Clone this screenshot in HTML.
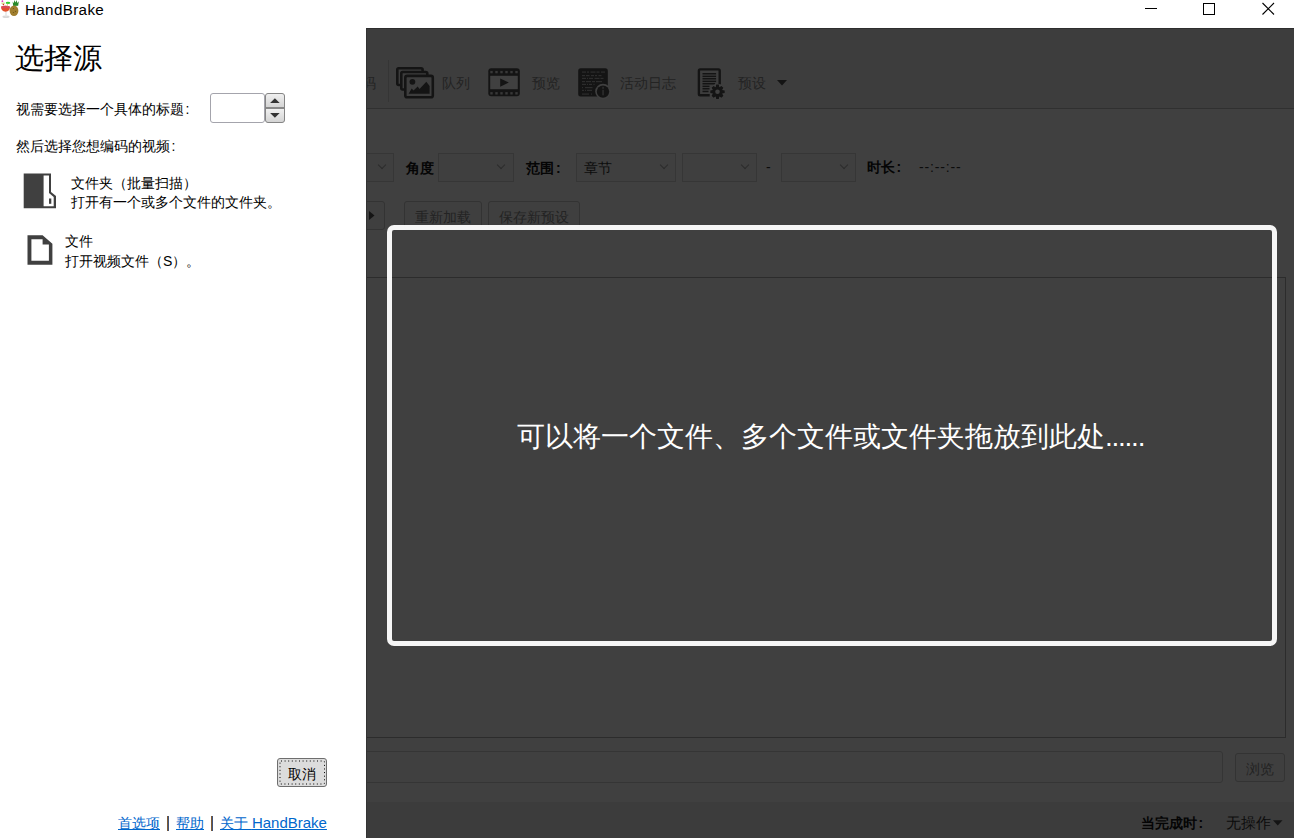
<!DOCTYPE html>
<html><head><meta charset="utf-8">
<style>
*{margin:0;padding:0;box-sizing:border-box}
html,body{width:1294px;height:838px;overflow:hidden;background:#fff;font-family:"Liberation Sans",sans-serif;color:#000}
.a{position:absolute;white-space:nowrap}
#titlebar{position:absolute;left:0;top:0;width:1294px;height:28px;background:#fff}
#left{position:absolute;left:0;top:28px;width:366px;height:810px;background:#fff}
#main{position:absolute;left:366px;top:28px;width:928px;height:810px;background:#404040;overflow:hidden}
.t14{font-size:14px;line-height:18px}
.link{color:#0066cc;text-decoration:underline;text-underline-offset:1px}
.dk{color:#0c0c0c}
.tb{color:#232323}
.bl{color:#050505;font-weight:bold}
.dd{position:absolute;border:1px solid #363636;background:#3f3f3f}
.chev{position:absolute;width:6px;height:6px;border-right:1.3px solid #2c2c2c;border-bottom:1.3px solid #2c2c2c;transform:rotate(45deg)}
.btn{position:absolute;border:1px solid #333;border-radius:3px;background:#3f3f3f}
.hl{position:absolute;height:1px;background:#2a2a2a}
.vl{position:absolute;width:1px;background:#2a2a2a}
</style></head><body>

<div id="titlebar">
  <svg class="a" style="left:0;top:0" width="22" height="22" viewBox="0 0 22 22">
  <ellipse cx="6" cy="16.8" rx="3.6" ry="1.2" fill="#d8d8d8"/>
  <rect x="5.2" y="11.5" width="1.6" height="5" fill="#e6e6e6"/>
  <path d="M1.2 6.5 Q5.5 5.2 9.8 6.5 Q10.2 11.5 5.5 11.8 Q1 11.5 1.2 6.5Z" fill="#e0502a"/>
  <path d="M1.3 6.5 Q5.5 5.2 9.8 6.5 L9.7 8.6 Q5.5 7.6 1.4 8.6Z" fill="#d8485a"/>
  <ellipse cx="8" cy="2.9" rx="2.3" ry="1.1" fill="#30d030"/>
  <rect x="7.1" y="3.5" width="0.6" height="3" fill="#c8b070"/>
  <circle cx="2.4" cy="1.2" r="0.9" fill="#e040c0"/>
  <rect x="1.3" y="2.6" width="3.6" height="1.2" fill="#d0d880"/>
  <circle cx="3.4" cy="4.6" r="0.8" fill="#d03020"/>
  <path d="M12.6 1.5 L13.8 3.2 L14.4 0 L15.6 2.6 L16.8 0 L17.2 3 L18.8 1.2 L18.2 5.8 L13.2 6Z" fill="#2a8a2a"/>
  <ellipse cx="14" cy="10.8" rx="4.4" ry="5.2" fill="#a07e2e"/>
  <g fill="#6e5418"><circle cx="13.5" cy="8.5" r="0.6"/><circle cx="13.5" cy="12.5" r="0.6"/><circle cx="15.5" cy="11.3" r="0.6"/></g>
</svg>
<div class="a" style="left:25px;top:-0.5px;font-size:15.2px;line-height:20px;letter-spacing:0.35px;color:#000">HandBrake</div>
<svg class="a" style="left:1130px;top:0" width="164" height="28" viewBox="0 0 164 28">
  <rect x="15" y="8" width="12" height="1" fill="#000"/>
  <rect x="73.5" y="3.5" width="11" height="11" fill="none" stroke="#000" stroke-width="1"/>
  <path d="M132.5 3 L144 14.5 M144 3 L132.5 14.5" stroke="#000" stroke-width="1.1"/>
</svg>
</div>

<div id="left"></div>

<div class="a" style="left:15px;top:39px;font-size:29px;line-height:38px">选择源</div>
<div class="a t14" style="left:16px;top:100px">视需要选择一个具体的标题<span style="margin-left:1.5px">:</span></div>
<div class="a" style="left:210px;top:93px;width:55px;height:30px;border:1px solid #a4a4ac;border-radius:3px;background:#fff"></div>
<div class="a" style="left:265px;top:93px;width:20px;height:30px;border:1px solid #858585;border-radius:3px;background:#888;overflow:hidden">
  <div style="position:absolute;left:0;top:0;width:18px;height:13px;background:linear-gradient(#f0f0f0,#d4d4d4)"></div>
  <div style="position:absolute;left:0;top:15px;width:18px;height:13px;background:linear-gradient(#f0f0f0,#d4d4d4)"></div>
  <svg style="position:absolute;left:0;top:0" width="18" height="28"><path d="M4.1 8.9 L8.9 4.2 L13.7 8.9Z M4.1 19 L8.9 23.8 L13.7 19Z" fill="#333"/></svg>
</div>
<div class="a t14" style="left:16px;top:137px">然后选择您想编码的视频<span style="margin-left:1.5px">:</span></div>
<svg class="a" style="left:23px;top:173px" width="34" height="36" viewBox="0 0 34 36">
  <path d="M0.7 0.5 H28 V19 L33 23 V35.3 H0.7Z" fill="#404040"/>
  <path d="M20.6 2.5 H26 V20 L30.7 24 V33.3 H20.6Z" fill="#fff"/>
  <rect x="26" y="25.5" width="2.3" height="5.3" fill="#404040"/>
</svg>
<div class="a t14" style="left:71px;top:174px">文件夹（批量扫描）</div>
<div class="a t14" style="left:71px;top:193px">打开有一个或多个文件的文件夹。</div>
<svg class="a" style="left:27px;top:235px" width="26" height="30" viewBox="0 0 26 30">
  <path d="M0.5 0.2 H15.6 L25.4 8.8 V29.8 H0.5Z M4.4 4.2 V25.8 H21.9 V9.4 H15.6 V4.2Z" fill="#404040" fill-rule="evenodd"/>
</svg>
<div class="a t14" style="left:65px;top:232px">文件</div>
<div class="a t14" style="left:65px;top:252px">打开视频文件（S）。</div>
<div class="a" style="left:277px;top:758px;width:50px;height:29px;border:1px solid #6e6e6e;border-radius:3px;background:#dcdcdc">
  <svg style="position:absolute;left:1px;top:1px" width="46" height="25"><rect x="1" y="1" width="44.5" height="23" rx="1" fill="none" stroke="#000" stroke-width="1" stroke-dasharray="1 2.6"/></svg>
  <div class="a t14" style="left:10px;top:6px">取消</div>
</div>
<div class="a t14" style="left:118px;top:814px"><span class="link">首选项</span></div>
<div class="a" style="left:167px;top:816px;width:2px;height:15px;background:linear-gradient(90deg,#a06010,#2050a0)"></div>
<div class="a t14" style="left:176px;top:814px"><span class="link">帮助</span></div>
<div class="a" style="left:211px;top:816px;width:2px;height:15px;background:linear-gradient(90deg,#a06010,#2050a0)"></div>
<div class="a t14" style="left:220px;top:814px"><span class="link">关于 <span style="font-size:15px">HandBrake</span></span></div>


<div id="main"><div style="position:absolute;left:-366px;top:-28px;width:1294px;height:838px">
<!-- toolbar -->
<div class="a" style="left:366px;top:28px;width:928px;height:80px;background:#3d3d3d"></div>
<div class="hl" style="left:366px;top:28px;width:928px;background:#2e2e2e"></div>
<div class="hl" style="left:366px;top:108px;width:928px;background:#303030"></div>
<div class="vl" style="left:388px;top:60px;height:42px;background:#353535"></div>
<div class="a t14 tb" style="left:362px;top:74px">码</div>
<svg class="a" style="left:395px;top:66px" width="40" height="33" viewBox="0 0 40 33">
  <g fill="none" stroke="#141414" stroke-width="2.6">
    <path d="M6 19 H3.8 Q2.3 19 2.3 17.5 V3.5 Q2.3 2.3 3.5 2.3 H26 Q27.6 2.3 27.6 3.8 V5.5"/>
    <path d="M10 23.5 H7.6 Q6.3 23.5 6.3 22 V7.3 Q6.3 6 7.6 6 H30.5 Q32.3 6 32.3 7.5 V9.8"/>
    <rect x="10.3" y="9.9" width="27.5" height="21.3" rx="1.8"/>
  </g>
  <circle cx="17.4" cy="15.8" r="2.9" fill="#141414"/>
  <path d="M13.6 27.7 L16.7 22.5 L18.5 24.6 L22.7 20.6 L24.5 23 L31.3 15.8 L34.6 19.9 V27.7Z" fill="#141414"/>
</svg>
<div class="a t14 tb" style="left:442px;top:74px">队列</div>
<svg class="a" style="left:487px;top:67px" width="34" height="31" viewBox="0 0 34 31">
  <rect x="1.3" y="1.3" width="31.5" height="28" rx="3" fill="#141414"/>
  <rect x="3.2" y="8.8" width="27.6" height="13.4" fill="#404040"/>
  <g fill="#383838"><rect x="3.3" y="3.9" width="2.4" height="2.4"/><rect x="3.3" y="25.1" width="2.4" height="2.4"/><rect x="8.3" y="3.9" width="2.4" height="2.4"/><rect x="8.3" y="25.1" width="2.4" height="2.4"/><rect x="13.3" y="3.9" width="2.4" height="2.4"/><rect x="13.3" y="25.1" width="2.4" height="2.4"/><rect x="18.3" y="3.9" width="2.4" height="2.4"/><rect x="18.3" y="25.1" width="2.4" height="2.4"/><rect x="23.3" y="3.9" width="2.4" height="2.4"/><rect x="23.3" y="25.1" width="2.4" height="2.4"/><rect x="28.3" y="3.9" width="2.4" height="2.4"/><rect x="28.3" y="25.1" width="2.4" height="2.4"/></g>
  <path d="M13.2 11.5 V19.8 L21.8 15.5Z" fill="#141414"/>
</svg>
<div class="a t14 tb" style="left:532px;top:74px">预览</div>
<svg class="a" style="left:577px;top:67px" width="36" height="33" viewBox="0 0 36 33">
  <rect x="1.2" y="1.2" width="29.6" height="28.4" rx="2.5" fill="#141414"/>
  <g fill="#2c2c2c">
    <rect x="5" y="4.5" width="4" height="1.2"/><rect x="10" y="4.5" width="2" height="1.2"/><rect x="13.5" y="4.5" width="5" height="1.2"/><rect x="19.5" y="4.5" width="3" height="1.2"/><rect x="24" y="4.5" width="4" height="1.2"/>
    <rect x="5" y="8" width="3" height="1.2"/><rect x="9" y="8" width="3.5" height="1.2"/><rect x="14" y="8" width="3" height="1.2"/><rect x="18" y="8" width="2" height="1.2"/><rect x="21.5" y="8" width="3" height="1.2"/>
    <rect x="5" y="10.8" width="4" height="1.2"/><rect x="10" y="10.8" width="1" height="1.2"/><rect x="12" y="10.8" width="4" height="1.2"/><rect x="17.5" y="10.8" width="5" height="1.2"/><rect x="23.5" y="10.8" width="3" height="1.2"/>
    <rect x="5" y="14" width="3" height="1.2"/><rect x="9" y="14" width="5" height="1.2"/><rect x="15" y="14" width="3" height="1.2"/><rect x="19" y="14" width="6" height="1.2"/>
    <rect x="5" y="16.8" width="4" height="1.2"/><rect x="10" y="16.8" width="1" height="1.2"/><rect x="12" y="16.8" width="3" height="1.2"/><rect x="16.5" y="16.8" width="1" height="1.2"/>
    <rect x="5" y="20" width="1" height="1.2"/><rect x="8" y="20" width="7.5" height="1.2"/>
    <rect x="5" y="22.8" width="2" height="1.2"/><rect x="8" y="22.8" width="1" height="1.2"/><rect x="10" y="22.8" width="5" height="1.2"/>
    <rect x="5" y="26.5" width="7" height="1.2"/><rect x="14" y="26.5" width="1" height="1.2"/>
  </g>
  <circle cx="26" cy="24.6" r="7.8" fill="#404040"/>
  <circle cx="26" cy="24.6" r="6.2" fill="#141414"/>
  <rect x="25.2" y="19.8" width="1.7" height="2" fill="#2c2c2c"/>
  <rect x="25.2" y="22.8" width="1.7" height="5.5" fill="#2c2c2c"/>
</svg>
<div class="a t14 tb" style="left:620px;top:74px">活动日志</div>
<svg class="a" style="left:696px;top:67px" width="32" height="33" viewBox="0 0 32 33">
  <path d="M13.7 28.2 H4.2 Q2.9 28.2 2.9 26.9 V3.7 Q2.9 2.4 4.2 2.4 H22.4 Q23.7 2.4 23.7 3.7 V17.4" fill="none" stroke="#141414" stroke-width="2.4"/>
  <g fill="#141414">
    <rect x="6.5" y="6" width="13.6" height="1.5"/><rect x="6.5" y="8.6" width="13.6" height="1.5"/><rect x="6.5" y="11" width="13.6" height="1.5"/><rect x="6.5" y="13.6" width="13.6" height="1.5"/><rect x="6.5" y="16" width="12.6" height="1.5"/>
    <rect x="6.5" y="18.6" width="7" height="1.5"/><rect x="6.5" y="21" width="7" height="1.5"/><rect x="6.5" y="23.7" width="6" height="1.5"/>
  </g>
  <g transform="translate(21.5 24.8)">
    <circle r="7.8" fill="#404040"/>
    <path d="M-1.3 -7.2 H1.3 L1.8 -4.6 L4 -5.9 L5.9 -4 L4.6 -1.8 L7.2 -1.3 V1.3 L4.6 1.8 L5.9 4 L4 5.9 L1.8 4.6 L1.3 7.2 H-1.3 L-1.8 4.6 L-4 5.9 L-5.9 4 L-4.6 1.8 L-7.2 1.3 V-1.3 L-4.6 -1.8 L-5.9 -4 L-4 -5.9 L-1.8 -4.6Z" fill="#141414"/>
    <circle r="2.3" fill="#404040"/>
  </g>
</svg>
<div class="a t14 tb" style="left:738px;top:74px">预设</div>
<svg class="a" style="left:776px;top:79px" width="12" height="8"><path d="M1 1 H11 L6 6.5Z" fill="#141414"/></svg>

<!-- row 2 -->
<div class="dd" style="left:340px;top:153px;width:54px;height:29px"></div>
<div class="chev" style="left:379px;top:162px"></div>
<div class="a t14 bl" style="left:406px;top:159px">角度</div>
<div class="dd" style="left:438px;top:153px;width:76px;height:29px"></div>
<div class="chev" style="left:498px;top:162px"></div>
<div class="a t14 bl" style="left:526px;top:159px">范围<span style="margin-left:2px">:</span></div>
<div class="dd" style="left:576px;top:153px;width:100px;height:29px"></div>
<div class="a t14 dk" style="left:584px;top:159px">章节</div>
<div class="chev" style="left:661px;top:162px"></div>
<div class="dd" style="left:682px;top:153px;width:75px;height:29px"></div>
<div class="chev" style="left:742px;top:162px"></div>
<div class="a t14 dk" style="left:766px;top:158px">-</div>
<div class="dd" style="left:781px;top:153px;width:75px;height:29px"></div>
<div class="chev" style="left:841px;top:162px"></div>
<div class="a t14 bl" style="left:867px;top:158px">时长<span style="margin-left:1.5px">:</span></div>
<div class="a t14 dk" style="left:919px;top:158px;letter-spacing:0.85px">--:--:--</div>

<!-- row 3 -->
<div class="btn" style="left:340px;top:201px;width:45px;height:29px"></div>
<svg class="a" style="left:368px;top:210px" width="8" height="11"><path d="M1 1 V10 L6.5 5.5Z" fill="#141414"/></svg>
<div class="btn" style="left:404px;top:201px;width:78px;height:29px"></div>
<div class="a t14 tb" style="left:415px;top:208px">重新加载</div>
<div class="btn" style="left:488px;top:201px;width:92px;height:29px"></div>
<div class="a t14 tb" style="left:499px;top:208px">保存新预设</div>

<!-- tab box -->
<div class="a" style="left:340px;top:277px;width:946px;height:461px;border:1px solid #2c2c2c"></div>

<!-- destination -->
<div class="a" style="left:340px;top:751px;width:883px;height:32px;border:1px solid #353535;border-radius:3px"></div>
<div class="btn" style="left:1235px;top:753px;width:50px;height:29px"></div>
<div class="a t14 tb" style="left:1246px;top:760px">浏览</div>

<!-- status bar -->
<div class="a" style="left:366px;top:802px;width:928px;height:36px;background:#3c3c3c"></div>
<div class="a t14 bl" style="left:1141px;top:814px">当完成时<span style="margin-left:1.5px">:</span></div>
<div class="a t14 dk" style="left:1226px;top:814px;font-size:15px">无操作</div>
<svg class="a" style="left:1272px;top:819px" width="12" height="8"><path d="M1 1.3 H10.5 L5.75 6.5Z" fill="#141414"/></svg>

<!-- left edge shadow -->
<div class="vl" style="left:366px;top:28px;height:810px;background:#333"></div>

<!-- drop zone -->
<div class="a" style="left:387px;top:225px;width:890px;height:421px;border:5px solid rgba(252,252,252,0.97);border-radius:7px"></div>
<div class="a" style="left:517px;top:418px;font-size:28px;line-height:38px;color:#fff">可以将一个文件、多个文件或文件夹拖放到此处<span style="letter-spacing:-1.25px">......</span></div>
</div></div>

</body></html>
